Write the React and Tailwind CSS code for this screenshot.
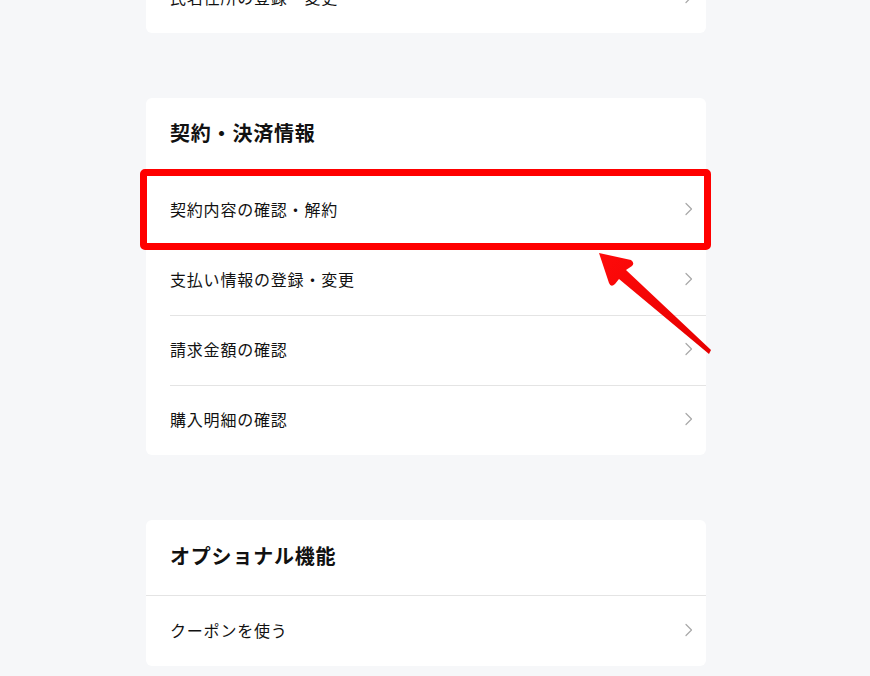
import React from "react";

const Chevron = () => (
  <svg width="9" height="14" viewBox="0 0 9 14" fill="none" className="shrink-0">
    <path d="M2 1.5 L7.5 7 L2 12.5" stroke="#a8a8a8" strokeWidth="1.2" strokeLinecap="round" strokeLinejoin="round" />
  </svg>
);

const Row = ({ label }) => (
  <div className="ml-6 border-t border-[#e4e4e4]">
    <div className="flex h-[69px] items-center justify-between pb-[3px] pr-[13px]">
      <span className="text-[16px] tracking-[0.8px] text-[#111]">{label}</span>
      <Chevron />
    </div>
  </div>
);

export default function App() {
  return (
    <div
      className="relative min-h-screen overflow-hidden bg-[#f6f7f9]"
      style={{ fontFamily: '"Noto Sans CJK JP", "Noto Sans", sans-serif' }}
    >
      <div className="ml-[146px] flex w-[560px] flex-col pb-10">
        <div className="-mt-[36px] rounded-md bg-white">
          <div className="flex h-[69px] items-center justify-between pb-[3px] pl-6 pr-[13px]">
            <span className="text-[16px] tracking-[0.8px] text-[#111]">氏名住所の登録・変更</span>
            <Chevron />
          </div>
        </div>

        <div className="mt-[65px] rounded-md bg-white">
          <div className="flex h-[77px] items-center pb-[7px] pl-6">
            <h2 className="text-[20px] font-bold tracking-[0.8px] text-[#111]">契約・決済情報</h2>
          </div>
          <Row label="契約内容の確認・解約" />
          <Row label="支払い情報の登録・変更" />
          <Row label="請求金額の確認" />
          <Row label="購入明細の確認" />
        </div>

        <div className="mt-[65px] rounded-md bg-white">
          <div className="flex h-[76px] items-center border-b border-[#e4e4e4] pb-[3px] pl-6">
            <h2 className="text-[20px] font-bold tracking-[0.8px] text-[#111]">オプショナル機能</h2>
          </div>
          <div className="flex h-[70px] items-center justify-between pb-[3px] pl-6 pr-[13px]">
            <span className="text-[16px] tracking-[0.8px] text-[#111]">クーポンを使う</span>
            <Chevron />
          </div>
        </div>
      </div>

      <div className="pointer-events-none absolute left-[140px] top-[169px] h-[81px] w-[571px] rounded-[5px] border-[7px] border-[#ff0000]" />

      <svg
        className="pointer-events-none absolute left-0 top-0"
        width="870"
        height="676"
        viewBox="0 0 870 676"
      >
        <defs>
          <linearGradient id="ag" x1="0" y1="0" x2="1" y2="1">
            <stop offset="0" stopColor="#ff0a0a" />
            <stop offset="1" stopColor="#e60000" />
          </linearGradient>
        </defs>
        <path
          d="M599 253 L631 260 Q635 263 632 266 L626 270 L711 350 L709 354 L619 279 L615 284 Q611 288 609 283 Z"
          fill="url(#ag)"
        />
      </svg>
    </div>
  );
}
